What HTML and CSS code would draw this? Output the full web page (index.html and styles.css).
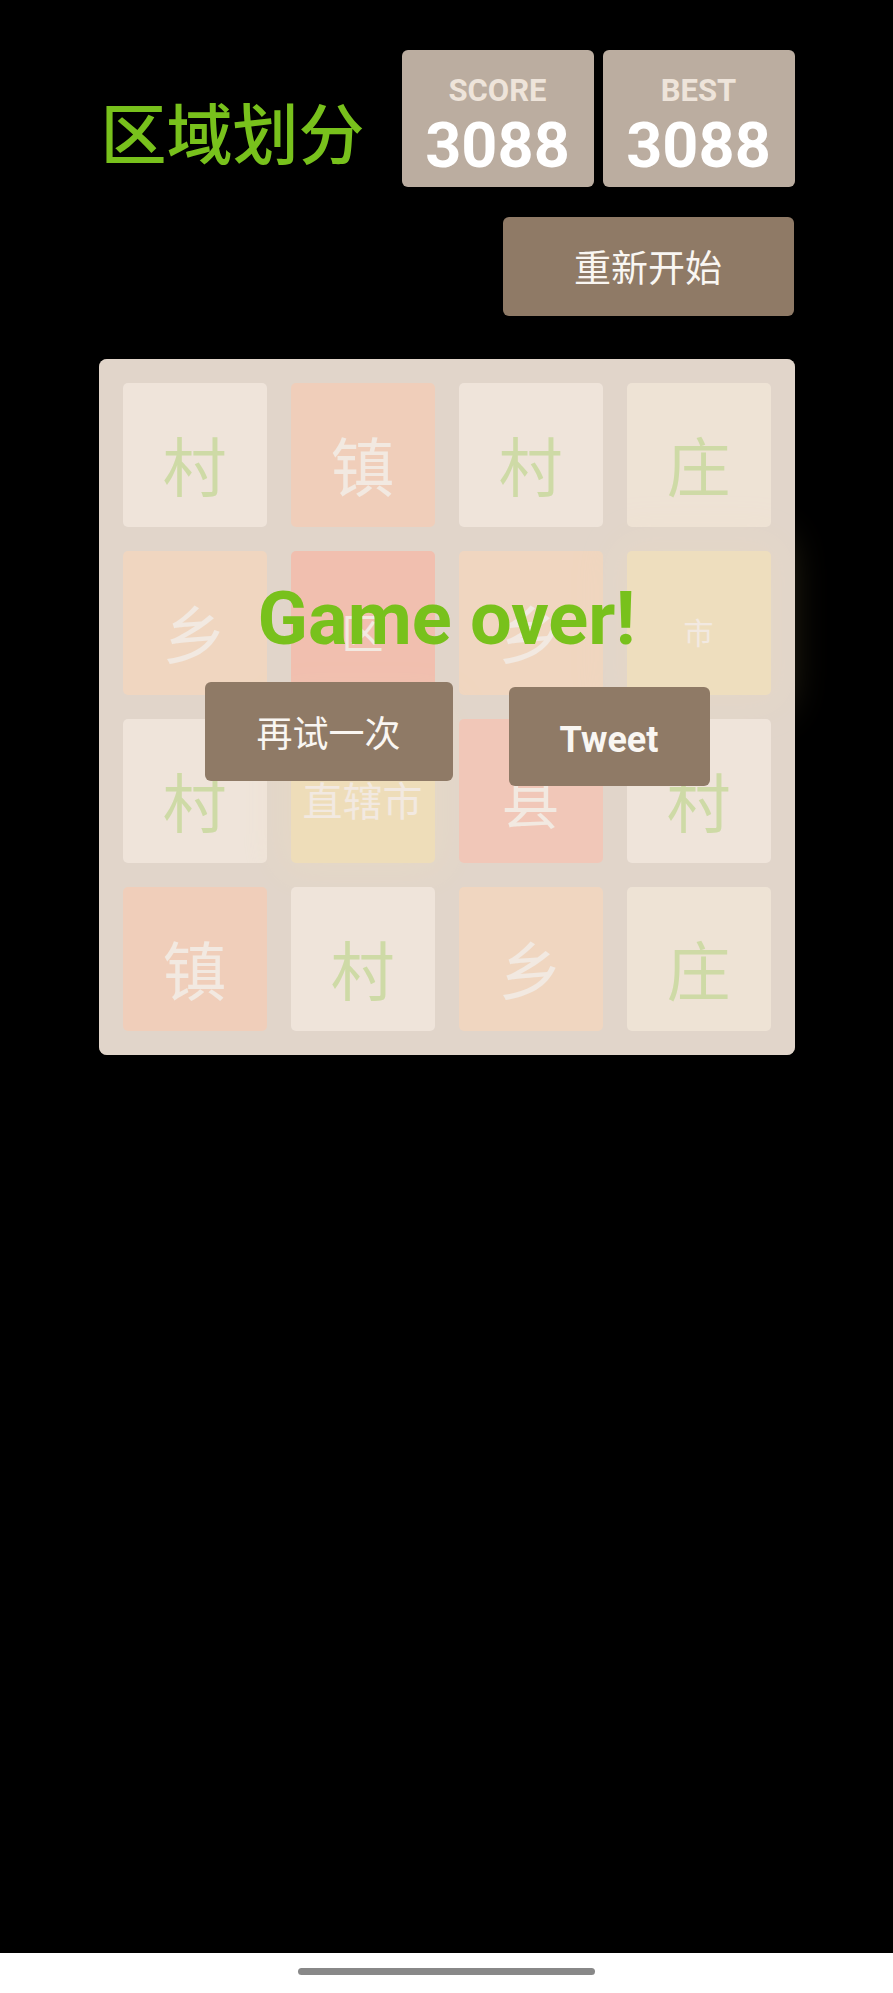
FILE: index.html
```html
<!DOCTYPE html>
<html lang="zh">
<head>
    <meta charset="UTF-8">
    <meta name="viewport" content="width=device-width, initial-scale=1.0">
    <title>区域划分</title>
    <link rel="stylesheet" href="styles.css">
</head>
<body>
    <div class="container">
        <div class="heading">
            <h1 class="title">区域划分</h1>
            <div class="scores-container">
                <div class="score-box">
                    <span class="score-label">SCORE</span>
                    <span class="score-value">3088</span>
                </div>
                <div class="score-box">
                    <span class="score-label">BEST</span>
                    <span class="score-value">3088</span>
                </div>
            </div>
        </div>

        <div class="above-game">
            <a class="restart-button">重新开始</a>
        </div>

        <div class="game-container">
            <div class="grid">
                <div class="tile tile-2">村</div>
                <div class="tile tile-16">镇</div>
                <div class="tile tile-2">村</div>
                <div class="tile tile-4">庄</div>

                <div class="tile tile-8">乡</div>
                <div class="tile tile-64">区</div>
                <div class="tile tile-8">乡</div>
                <div class="tile tile-128">市</div>

                <div class="tile tile-2">村</div>
                <div class="tile tile-256">直辖市</div>
                <div class="tile tile-32">县</div>
                <div class="tile tile-2">村</div>

                <div class="tile tile-16">镇</div>
                <div class="tile tile-2">村</div>
                <div class="tile tile-8">乡</div>
                <div class="tile tile-4">庄</div>
            </div>

            <!-- game over layer -->
            <div class="game-message">
                <p>Game over!</p>
                <div class="lower">
                    <a class="retry-button">再试一次</a>
                    <a class="tweet-button">Tweet</a>
                </div>
            </div>
        </div>
    </div>

    <div class="nav-bar"><span class="nav-pill"></span></div>
</body>
</html>
```

FILE: styles.css
```css
* {
    box-sizing: border-box;
}

body {
    margin: 0;
    height: 100vh;
    background: #000;
    font-family: Roboto, "Noto Sans CJK SC", sans-serif;
    display: flex;
    flex-direction: column;
}

.container {
    width: 696px;
    margin: 0 auto;
    padding-top: 50px;
}

.heading {
    display: flex;
    justify-content: space-between;
    align-items: flex-start;
}

.title {
    margin: 47px 0 0 2px;
    font-family: "Noto Sans CJK SC", sans-serif;
    font-size: 66px;
    line-height: 66px;
    font-weight: 500;
    color: #78c11c;
}

.scores-container {
    display: flex;
    gap: 9px;
}

.score-box {
    width: 192px;
    height: 137px;
    padding-top: 25px;
    background: #bbada0;
    border-radius: 6px;
    text-align: center;
}

.score-label {
    display: block;
    font-size: 31px;
    line-height: 31px;
    font-weight: 700;
    color: #eee4da;
}

.score-value {
    display: block;
    margin-top: 8px;
    font-size: 63px;
    line-height: 63px;
    font-weight: 700;
    color: #fff;
}

.above-game {
    display: flex;
    justify-content: flex-end;
    margin-top: 30px;
}

.restart-button,
.retry-button,
.tweet-button {
    display: block;
    height: 99px;
    line-height: 99px;
    background: #8f7a66;
    border-radius: 6px;
    color: #f9f6f2;
    text-align: center;
    text-decoration: none;
}

.restart-button {
    width: 291px;
    margin-right: 1px;
    font-family: "Noto Sans CJK SC", sans-serif;
    font-size: 37px;
}

.game-container {
    position: relative;
    margin-top: 43px;
    width: 696px;
    height: 696px;
    padding: 24px;
    background: #bbada0;
    border-radius: 8px;
}

.grid {
    display: grid;
    grid-template-columns: repeat(4, 144px);
    grid-auto-rows: 144px;
    gap: 24px;
}

.tile {
    padding-top: 8px;
    border-radius: 5px;
    text-align: center;
    font-family: "Noto Sans CJK SC", sans-serif;
    font-size: 64px;
    line-height: 144px;
    color: #f9f6f2;
    white-space: nowrap;
}

.tile-2 { background: #eee4da; color: #78c11c; }
.tile-4 { background: #ede0c8; color: #78c11c; }
.tile-8 { background: #f2b179; }
.tile-16 { background: #f59563; }
.tile-32 { background: #f67c5f; font-size: 58px; }
.tile-64 { background: #f65e3b; font-size: 42px; }

.tile-128 {
    background: #edcf72;
    font-size: 30px;
    box-shadow: 0 0 41px 14px rgba(243, 215, 116, 0.24);
}

.tile-256 {
    background: #edcc61;
    font-size: 40px;
    box-shadow: 0 0 41px 14px rgba(243, 215, 116, 0.32);
}

.game-message {
    position: absolute;
    top: 0;
    left: 0;
    right: 0;
    bottom: 0;
    padding-top: 223px;
    background: rgba(238, 228, 218, 0.73);
    border-radius: 8px;
    text-align: center;
}

.game-message p {
    margin: 0;
    font-size: 74px;
    line-height: 74px;
    font-weight: 700;
    color: #78c11c;
}

.lower {
    display: flex;
    justify-content: center;
    align-items: flex-start;
    gap: 56px;
    margin-top: 26px;
    padding-left: 21px;
}

.retry-button {
    width: 248px;
    font-family: "Noto Sans CJK SC", sans-serif;
    font-size: 36px;
}

.tweet-button {
    width: 201px;
    margin-top: 5px;
    padding-top: 4px;
    font-size: 36px;
    font-weight: 700;
}

.nav-bar {
    margin-top: auto;
    height: 40px;
    padding-top: 15px;
    background: #fff;
    display: flex;
    justify-content: center;
}

.nav-pill {
    width: 297px;
    height: 7px;
    border-radius: 4px;
    background: #888;
}
```
